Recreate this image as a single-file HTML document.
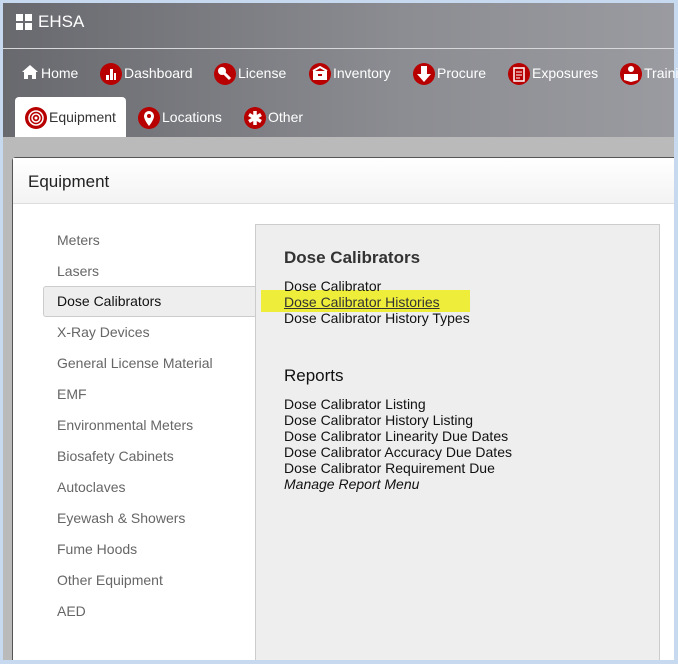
<!DOCTYPE html>
<html><head><style>
*{margin:0;padding:0;box-sizing:border-box}
body{width:678px;height:664px;overflow:hidden;background:#c6d9ef;font-family:"Liberation Sans",Arial,sans-serif;position:relative}
.a{position:absolute}
.hdr{left:3px;top:3px;width:671px;height:134px;background:linear-gradient(90deg,#68696e,#8c8d92 60%,#9a9ba0)}
.line{left:3px;top:48px;width:671px;height:1px;background:#d8d8da}
.nav{color:#fff;font-size:14px;white-space:nowrap}
.ic{display:inline-block;width:22px;height:22px;border-radius:50%;background:#b80000;vertical-align:middle;position:relative;margin-right:2px}
.ic svg{position:absolute;left:0;top:0}
.gray{left:3px;top:137px;width:671px;height:523px;background:#bababa}
.panel{left:12px;top:157px;width:662px;height:503px;background:#fff;border-left:1px solid #555;border-top:1px solid #555;border-radius:4px 0 0 0}
.ph{left:13px;top:158px;width:661px;height:46px;background:linear-gradient(#fff,#f3f3f3);border-bottom:1px solid #ddd}
.side{font-size:14px;color:#666}
.box{left:255px;top:224px;width:405px;height:440px;background:#eee;border:1px solid #ccc}
.t{font-size:14px;color:#111;line-height:16px}
</style></head><body>
<div class="a hdr"></div>
<div class="a line"></div>
<div class="a" style="left:16px;top:14px;width:16px;height:16px">
<div class="a" style="left:0;top:0;width:7px;height:7px;background:#fff"></div>
<div class="a" style="left:9px;top:0;width:7px;height:7px;background:#fff"></div>
<div class="a" style="left:0;top:9px;width:7px;height:7px;background:#fff"></div>
<div class="a" style="left:9px;top:9px;width:7px;height:7px;background:#fff"></div></div>
<div class="a" style="left:38px;top:12px;color:#fff;font-size:17px">EHSA</div>

<div class="a nav" style="left:22px;top:62px;line-height:22px"><svg width="16" height="14" viewBox="0 0 16 14" style="vertical-align:-1px;margin-right:3px"><path d="M8 0L0 7h2v7h4v-4h4v4h4V7h2z" fill="#fff"/></svg>Home</div>
<div class="a nav" style="left:100px;top:62px;line-height:22px"><span class="ic"><svg width="22" height="22"><rect x="6" y="12" width="3" height="5" fill="#fff"/><rect x="10" y="6" width="3" height="11" fill="#fff"/><rect x="14" y="10" width="2" height="7" fill="#fff"/></svg></span>Dashboard</div>
<div class="a nav" style="left:214px;top:62px;line-height:22px"><span class="ic"><svg width="22" height="22"><circle cx="8" cy="8" r="4" fill="#fff"/><path d="M9 9l7 7" stroke="#fff" stroke-width="3"/></svg></span>License</div>
<div class="a nav" style="left:309px;top:62px;line-height:22px"><span class="ic"><svg width="22" height="22"><rect x="4" y="8" width="14" height="9" fill="#fff"/><path d="M4 8l7-4 7 4" stroke="#fff" stroke-width="2" fill="none"/><rect x="9" y="11" width="4" height="2" fill="#b80000"/></svg></span>Inventory</div>
<div class="a nav" style="left:413px;top:62px;line-height:22px"><span class="ic"><svg width="22" height="22"><path d="M8 3h6v8h4l-7 8-7-8h4z" fill="#fff"/></svg></span>Procure</div>
<div class="a nav" style="left:508px;top:62px;line-height:22px"><span class="ic"><svg width="22" height="22"><rect x="6" y="5" width="10" height="13" fill="none" stroke="#fff" stroke-width="1.5"/><path d="M8 9h6M8 12h6M8 15h4" stroke="#fff"/></svg></span>Exposures</div>
<div class="a nav" style="left:620px;top:62px;line-height:22px"><span class="ic"><svg width="22" height="22"><circle cx="11" cy="6" r="3" fill="#fff"/><path d="M4 11h14v6l-7 2-7-2z" fill="#fff"/></svg></span>Training</div>

<div class="a" style="left:15px;top:97px;width:111px;height:40px;background:#fff;border-radius:4px 4px 0 0"></div>
<div class="a nav" style="left:25px;top:106px;line-height:22px;color:#333"><span class="ic"><svg width="22" height="22"><circle cx="11" cy="11" r="7" fill="none" stroke="#fff" stroke-width="1.5"/><circle cx="11" cy="11" r="4" fill="none" stroke="#fff" stroke-width="1.5"/><circle cx="11" cy="11" r="1.5" fill="#fff"/></svg></span>Equipment</div>
<div class="a nav" style="left:138px;top:106px;line-height:22px"><span class="ic"><svg width="22" height="22"><path d="M11 4a5 5 0 0 1 5 5c0 4-5 10-5 10S6 13 6 9a5 5 0 0 1 5-5z" fill="#fff"/><circle cx="11" cy="9" r="2" fill="#b80000"/></svg></span>Locations</div>
<div class="a nav" style="left:244px;top:106px;line-height:22px"><span class="ic"><svg width="22" height="22"><path d="M11 4v14M5 7.5l12 7M5 14.5l12-7" stroke="#fff" stroke-width="3.5"/></svg></span>Other</div>

<div class="a gray"></div>
<div class="a panel"></div>
<div class="a ph"></div>
<div class="a" style="left:28px;top:172px;font-size:17px;color:#222">Equipment</div>

<div class="a" style="left:43px;top:286px;width:214px;height:31px;background:#eee;border:1px solid #ccc;border-right:none;border-radius:3px 0 0 3px"></div>
<div class="a box"></div>
<div class="a side" style="left:57px;top:232px">Meters</div>
<div class="a side" style="left:57px;top:263px">Lasers</div>
<div class="a side" style="left:57px;top:293px;color:#111">Dose Calibrators</div>
<div class="a side" style="left:57px;top:324px">X-Ray Devices</div>
<div class="a side" style="left:57px;top:355px">General License Material</div>
<div class="a side" style="left:57px;top:386px">EMF</div>
<div class="a side" style="left:57px;top:417px">Environmental Meters</div>
<div class="a side" style="left:57px;top:448px">Biosafety Cabinets</div>
<div class="a side" style="left:57px;top:479px">Autoclaves</div>
<div class="a side" style="left:57px;top:510px">Eyewash &amp; Showers</div>
<div class="a side" style="left:57px;top:541px">Fume Hoods</div>
<div class="a side" style="left:57px;top:572px">Other Equipment</div>
<div class="a side" style="left:57px;top:603px">AED</div>

<div class="a" style="left:284px;top:248px;font-size:17px;font-weight:bold;color:#333">Dose Calibrators</div>
<div class="a" style="left:261px;top:290px;width:209px;height:22px;background:#eeee3a"></div>
<div class="a t" style="left:284px;top:278px">Dose Calibrator<br><span style="text-decoration:underline;color:#333">Dose Calibrator Histories</span><br>Dose Calibrator History Types</div>
<div class="a" style="left:284px;top:366px;font-size:17px;color:#111">Reports</div>
<div class="a t" style="left:284px;top:396px">Dose Calibrator Listing<br>Dose Calibrator History Listing<br>Dose Calibrator Linearity Due Dates<br>Dose Calibrator Accuracy Due Dates<br>Dose Calibrator Requirement Due<br><i>Manage Report Menu</i></div>
<div class="a" style="left:0;top:660px;width:678px;height:4px;background:#c6d9ef"></div>
</body></html>
